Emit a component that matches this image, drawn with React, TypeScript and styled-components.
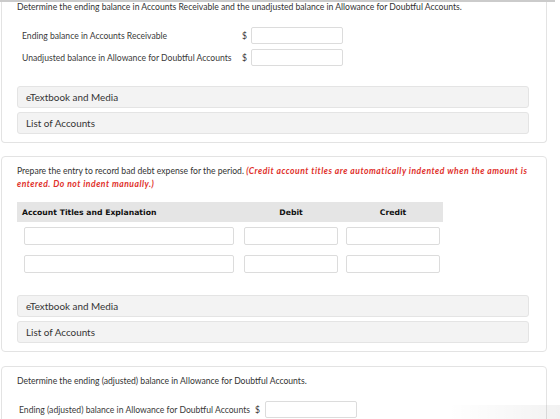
import React from "react";
import styled, { createGlobalStyle } from "styled-components";

const Global = createGlobalStyle`
  html, body {
    margin: 0;
    padding: 0;
    background: #ffffff;
  }
  body {
    font-family: "Lato", "Open Sans", "Liberation Sans", sans-serif;
    color: #333333;
    -webkit-font-smoothing: antialiased;
  }
`;

const Page = styled.div`
  width: 560px;
  height: 419px;
  overflow: hidden;
  position: relative;
`;

const TopStrip = styled.div`
  width: 555px;
  height: 2px;
  background: #cbcbcb;
`;

const Panel = styled.section<{ $cut?: boolean; $gap?: number }>`
  box-sizing: border-box;
  width: 546px;
  margin: ${(p) => p.$gap ?? 0}px 0 0 1px;
  border: 1px solid #e3e3e3;
  border-top: ${(p) => (p.$cut ? "none" : "1px solid #e3e3e3")};
  border-radius: ${(p) => (p.$cut ? "0 0 4px 4px" : "4px")};
  padding: ${(p) => (p.$cut ? "0" : "8px")} 15px 8px 15px;
`;

const Prompt = styled.p<{ $lh?: number }>`
  margin: 0;
  font-size: 8.6px;
  line-height: ${(p) => p.$lh ?? 13}px;
  color: #333333;
`;

const Note = styled.em`
  font-weight: 700;
  font-style: italic;
  letter-spacing: 0.5px;
  color: #e0302a;
`;

const AmountGrid = styled.div`
  display: grid;
  grid-template-columns: 216px 13px 92px;
  row-gap: 5px;
  margin-top: 15px;
  padding-left: 5px;
  align-items: center;
`;

const Label = styled.span`
  font-size: 8.6px;
  color: #3a3a3a;
  white-space: nowrap;
`;

const Dollar = styled.span`
  font-size: 8.6px;
  color: #333333;
  text-align: right;
  padding-right: 4px;
`;

const Field = styled.div<{ $w: number; $h?: number }>`
  box-sizing: border-box;
  width: ${(p) => p.$w}px;
  height: ${(p) => p.$h ?? 17}px;
  background: #ffffff;
  border: 1px solid #dcdcdc;
  border-radius: 2px;
`;

const Drawers = styled.div<{ $top: number }>`
  display: flex;
  flex-direction: column;
  gap: 4px;
  margin-top: ${(p) => p.$top}px;
`;

const Drawer = styled.div`
  box-sizing: border-box;
  height: 22px;
  width: 512px;
  display: flex;
  align-items: center;
  padding-left: 8px;
  background: #f3f3f3;
  border: 1px solid #e4e4e4;
  border-radius: 3px;
  font-size: 9.9px;
  color: #333333;
`;

const JournalHead = styled.div`
  box-sizing: border-box;
  display: flex;
  align-items: center;
  width: 426px;
  height: 20px;
  margin-top: 11px;
  padding: 0 3px 0 5px;
  background: #e5e5e5;
  font-family: "DejaVu Sans", Verdana, sans-serif;
  font-weight: 700;
  font-size: 7.7px;
  color: #111111;
`;

const HeadCell = styled.div<{ $w: number; $center?: boolean }>`
  width: ${(p) => p.$w}px;
  text-align: ${(p) => (p.$center ? "center" : "left")};
`;

const JournalRows = styled.div`
  display: flex;
  flex-direction: column;
  gap: 10px;
  margin-top: 5px;
`;

const JournalRow = styled.div`
  display: flex;
  padding-left: 7px;
`;

const Spacer = styled.div<{ $w: number }>`
  width: ${(p) => p.$w}px;
  flex: none;
`;

const InlineAmount = styled.div`
  display: flex;
  align-items: center;
  margin-top: 13px;
  padding-left: 2px;
`;

const InlineDollar = styled.span`
  font-size: 8.6px;
  color: #333333;
  margin: 0 5px 0 5px;
`;

const BottomShade = styled.div`
  position: absolute;
  left: 0;
  right: 0;
  bottom: 0;
  height: 14px;
  background: linear-gradient(90deg, rgba(0, 0, 0, 0) 80%, rgba(0, 0, 0, 0.05) 100%);
  pointer-events: none;
`;

const journalLines = [0, 1];

export default function App() {
  return (
    <Page>
      <Global />
      <TopStrip />

      <Panel $cut>
        <Prompt $lh={10}>
          Determine the ending balance in Accounts Receivable and the unadjusted balance in Allowance for
          Doubtful Accounts.
        </Prompt>
        <AmountGrid>
          <Label>Ending balance in Accounts Receivable</Label>
          <Dollar>$</Dollar>
          <Field $w={92} />
          <Label>Unadjusted balance in Allowance for Doubtful Accounts</Label>
          <Dollar>$</Dollar>
          <Field $w={92} />
        </AmountGrid>
        <Drawers $top={20}>
          <Drawer>eTextbook and Media</Drawer>
          <Drawer>List of Accounts</Drawer>
        </Drawers>
      </Panel>

      <Panel $gap={13}>
        <Prompt>
          Prepare the entry to record bad debt expense for the period.{" "}
          <Note>(Credit account titles are automatically indented when the amount is entered. Do not indent manually.)</Note>
        </Prompt>
        <JournalHead>
          <HeadCell $w={212}>Account Titles and Explanation</HeadCell>
          <Spacer $w={10} />
          <HeadCell $w={94} $center>
            Debit
          </HeadCell>
          <Spacer $w={8} />
          <HeadCell $w={94} $center>
            Credit
          </HeadCell>
        </JournalHead>
        <JournalRows>
          {journalLines.map((n) => (
            <JournalRow key={n}>
              <Field $w={210} $h={18} />
              <Spacer $w={10} />
              <Field $w={94} $h={18} />
              <Spacer $w={8} />
              <Field $w={94} $h={18} />
            </JournalRow>
          ))}
        </JournalRows>
        <Drawers $top={22}>
          <Drawer>eTextbook and Media</Drawer>
          <Drawer>List of Accounts</Drawer>
        </Drawers>
      </Panel>

      <Panel $gap={14}>
        <Prompt>Determine the ending (adjusted) balance in Allowance for Doubtful Accounts.</Prompt>
        <InlineAmount>
          <Label>Ending (adjusted) balance in Allowance for Doubtful Accounts</Label>
          <InlineDollar>$</InlineDollar>
          <Field $w={92} />
        </InlineAmount>
      </Panel>

      <BottomShade />
    </Page>
  );
}
